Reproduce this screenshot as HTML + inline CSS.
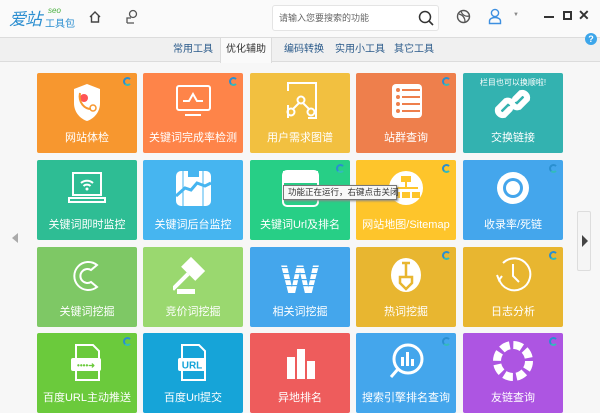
<!DOCTYPE html>
<html><head><meta charset="utf-8"><style>
*{margin:0;padding:0;box-sizing:border-box}
body{width:600px;height:400px;overflow:hidden;background:#f7f7f7;font-family:"Liberation Sans","Noto Sans CJK SC",sans-serif;position:relative}
.hdr{position:absolute;left:0;top:0;width:600px;height:37px;background:#fafafa}
.tabs{position:absolute;left:0;top:37px;width:600px;height:25px;background:#f0f0f0;border-top:1px solid #dcdcdc;border-bottom:1px solid #dcdcdc}
.tab{position:absolute;top:0;height:24px;line-height:23px;font-size:10px;color:#2a5a8a}
.tab.on{background:#fafafa;border-left:1px solid #dcdcdc;border-right:1px solid #dcdcdc;height:25px;color:#333;text-align:center}
.t{position:absolute;width:100px;height:80px;border-radius:2px;color:#fff;font-size:11px;text-align:center}
.t .l{position:absolute;left:0;right:0;top:58px;line-height:14px;white-space:nowrap}
.t svg.i{position:absolute;left:30px;top:8px}
.sp{position:absolute;right:5px;top:4px;width:9px;height:9px;border-radius:50%;border:2px solid #2a8fd0;border-right-color:transparent;border-bottom-color:#3bb}
.search{position:absolute;left:272px;top:5px;width:167px;height:26px;background:#fff;border:1px solid #e4e4e4;border-radius:3px;font-size:9px;color:#666;line-height:24px;padding-left:6px}
</style></head><body>
<div class="hdr"></div>
<div style="position:absolute;left:9px;top:5px;font-size:17px;color:#2b8ed0;font-style:italic;font-family:'Noto Sans CJK SC',sans-serif;letter-spacing:-1px">爱站</div>
<div style="position:absolute;left:48px;top:6px;font-size:8px;color:#4ab040;font-style:italic">seo</div>
<div style="position:absolute;left:45px;top:15px;font-size:10px;color:#2b8ed0;font-family:'Noto Sans CJK SC',sans-serif">工具包</div>
<svg style="position:absolute;left:88px;top:10px" width="14" height="14" viewBox="0 0 14 14"><path d="M2 7L7 2L12 7M3.5 6V12H10.5V6" fill="none" stroke="#444" stroke-width="1.4"/></svg>
<svg style="position:absolute;left:125px;top:9px" width="14" height="16" viewBox="0 0 14 16"><circle cx="8" cy="5" r="3.5" fill="none" stroke="#555" stroke-width="1.3"/><path d="M2 14V9H6M2 14H9" fill="none" stroke="#555" stroke-width="1.3"/></svg>
<div class="search">请输入您要搜索的功能
<svg style="position:absolute;right:4px;top:4px" width="16" height="16" viewBox="0 0 16 16"><circle cx="7" cy="7" r="5.5" fill="none" stroke="#333" stroke-width="1.5"/><path d="M11 11L15 15" stroke="#333" stroke-width="1.6"/></svg></div>
<svg style="position:absolute;left:456px;top:9px" width="15" height="15" viewBox="0 0 15 15"><circle cx="7.5" cy="7.5" r="6" fill="none" stroke="#555" stroke-width="1.4"/><path d="M3 5C7 6 9 9 9 13M5 2C6 6 10 8 13 7" fill="none" stroke="#555" stroke-width="1.2"/></svg>
<svg style="position:absolute;left:488px;top:8px" width="14" height="17" viewBox="0 0 14 17"><circle cx="7" cy="5" r="3.6" fill="none" stroke="#3d8fe0" stroke-width="1.4"/><path d="M1.5 15.5V13A5.5 3.5 0 0 1 12.5 13V15.5Z" fill="none" stroke="#3d8fe0" stroke-width="1.4"/></svg>
<div style="position:absolute;left:513px;top:12px;font-size:6px;color:#888">▼</div>
<div style="position:absolute;left:544px;top:16px;width:10px;height:2px;background:#333"></div>
<div style="position:absolute;left:563px;top:11px;width:9px;height:9px;border:2px solid #333"></div>
<div style="position:absolute;left:578px;top:7px;font-size:14px;font-weight:bold;color:#333">✕</div>
<div class="tabs">
<div class="tab" style="left:173px">常用工具</div>
<div class="tab on" style="left:220px;width:52px">优化辅助</div>
<div class="tab" style="left:284px">编码转换</div>
<div class="tab" style="left:335px">实用小工具</div>
<div class="tab" style="left:394px">其它工具</div>
</div>
<div style="position:absolute;left:585px;top:33px;width:12px;height:12px;border-radius:50%;background:#3da6ea;color:#fff;font-size:9px;font-weight:bold;text-align:center;line-height:12px">?</div>

<div style="position:absolute;left:12px;top:233px;width:0;height:0;border-top:5px solid transparent;border-bottom:5px solid transparent;border-right:6px solid #aaa"></div>
<div style="position:absolute;left:577px;top:211px;width:14px;height:60px;border:1px solid #ddd;border-radius:2px;background:#f5f5f5"></div>
<div style="position:absolute;left:582px;top:235px;width:0;height:0;border-top:6px solid transparent;border-bottom:6px solid transparent;border-left:6px solid #444"></div>

<!-- row1 -->
<div class="t" style="left:37px;top:73px;background:#f7972f"><div class="sp"></div>
<svg class="i" width="40" height="44" viewBox="0 0 40 44"><path d="M20 3L33 8V22C33 32 26 38 20 40C14 38 7 32 7 22V8Z" fill="#fff"/><circle cx="17" cy="17" r="4" fill="#f55"/><path d="M13 12C11 22 18 28 24 28" fill="none" stroke="#f7972f" stroke-width="2"/><circle cx="26" cy="27" r="3" fill="none" stroke="#f7972f" stroke-width="1.5"/></svg><div class="l">网站体检</div></div>
<div class="t" style="left:143px;top:73px;background:#fe8449"><div class="sp"></div>
<svg class="i" width="40" height="44" viewBox="0 0 40 44"><rect x="4" y="5" width="33" height="24" rx="2" fill="none" stroke="#fff" stroke-width="2"/><path d="M10 20H16L20 13L24 20H30M12 34H28" fill="none" stroke="#fff" stroke-width="2"/></svg><div class="l">关键词完成率检测</div></div>
<div class="t" style="left:250px;top:73px;background:#f2c040">
<svg class="i" width="40" height="44" viewBox="0 0 40 44"><path d="M8 10V2H36V37H28M8 24V37" fill="none" stroke="#fff" stroke-width="2"/><circle cx="21" cy="19" r="3.5" fill="none" stroke="#fff" stroke-width="2"/><circle cx="11" cy="31" r="3.5" fill="none" stroke="#fff" stroke-width="2"/><circle cx="31" cy="31" r="3.5" fill="none" stroke="#fff" stroke-width="2"/><path d="M19 22L13 28M23 22L29 28" stroke="#fff" stroke-width="2"/></svg><div class="l">用户需求图谱</div></div>
<div class="t" style="left:356px;top:73px;background:#ee7f4c"><div class="sp"></div>
<svg class="i" width="40" height="44" viewBox="0 0 40 44"><rect x="6" y="3" width="30" height="34" rx="4" fill="#fff"/><g fill="#ee7f4c"><circle cx="12" cy="9" r="2"/><circle cx="12" cy="16" r="2"/><circle cx="12" cy="23" r="2"/><circle cx="12" cy="30" r="2"/><rect x="16" y="8" width="18" height="2"/><rect x="16" y="15" width="18" height="2"/><rect x="16" y="22" width="18" height="2"/><rect x="16" y="29" width="18" height="2"/></g></svg><div class="l">站群查询</div></div>
<div class="t" style="left:463px;top:73px;background:#33b2b0"><div style="position:absolute;top:4px;width:100%;font-size:8px">栏目也可以换顺啦!</div>
<svg class="i" width="40" height="44" viewBox="0 0 40 44"><g fill="none" stroke="#fff" stroke-width="6" stroke-linecap="round"><path d="M17 28L11 34A5 5 0 0 1 5 28L13 20A5 5 0 0 1 19 22"/><path d="M22 18L28 12A5 5 0 0 1 34 18L26 26A5 5 0 0 1 20 24"/></g></svg><div class="l">交换链接</div></div>
<!-- row2 -->
<div class="t" style="left:37px;top:160px;background:#2ebd94">
<svg class="i" width="40" height="44" viewBox="0 0 40 44"><rect x="6" y="5" width="28" height="22" fill="none" stroke="#fff" stroke-width="2"/><path d="M2 30H38V34H2Z" fill="none" stroke="#fff" stroke-width="2"/><path d="M14 15A9 9 0 0 1 26 15M16.5 18A5 5 0 0 1 23.5 18" fill="none" stroke="#fff" stroke-width="2"/><circle cx="20" cy="21" r="1.5" fill="#fff"/></svg><div class="l">关键词即时监控</div></div>
<div class="t" style="left:143px;top:160px;background:#46b5f0">
<svg class="i" width="40" height="44" viewBox="0 0 40 44"><rect x="3" y="3" width="35" height="35" rx="5" fill="#fff"/><path d="M3 28L12 20L18 22L24 15L32 18L38 15" fill="none" stroke="#46b5f0" stroke-width="3"/><path d="M10 3V38M30 3V38" stroke="#46b5f0" stroke-width="1"/><rect x="15" y="3" width="11" height="6" fill="#46b5f0"/></svg><div class="l">关键词后台监控</div></div>
<div class="t" style="left:250px;top:160px;background:#27cf86"><div class="sp"></div>
<svg class="i" width="40" height="44" viewBox="0 0 40 44"><rect x="3" y="3" width="35" height="35" rx="4" fill="none" stroke="#fff" stroke-width="2"/><rect x="3" y="3" width="35" height="12" fill="#fff"/><rect x="10" y="25" width="5" height="5" fill="#fff"/><rect x="18" y="25" width="5" height="5" fill="#fff"/><rect x="26" y="25" width="5" height="5" fill="#fff"/></svg><div class="l">关键词Url及排名</div></div>
<div class="t" style="left:356px;top:160px;background:#fec52b"><div class="sp"></div>
<svg class="i" width="40" height="44" viewBox="0 0 40 44"><circle cx="20" cy="20" r="17" fill="#fff"/><g fill="#fec52b"><rect x="15" y="8" width="10" height="6"/><rect x="8" y="19" width="24" height="2"/><rect x="19" y="14" width="2" height="6"/><rect x="6" y="24" width="8" height="6"/><rect x="16" y="24" width="8" height="6"/><rect x="26" y="24" width="8" height="6"/></g></svg><div class="l">网站地图/Sitemap</div></div>
<div class="t" style="left:463px;top:160px;background:#44a6ec"><div class="sp"></div>
<svg class="i" width="40" height="44" viewBox="0 0 40 44"><circle cx="20" cy="20" r="16" fill="#fff"/><circle cx="20" cy="20" r="10" fill="#44a6ec"/><circle cx="20" cy="20" r="7" fill="#fff"/></svg><div class="l">收录率/死链</div></div>
<!-- row3 -->
<div class="t" style="left:37px;top:247px;background:#7ec865">
<svg class="i" width="40" height="44" viewBox="0 0 40 44"><path d="M30 10A14 14 0 1 0 30 32L24 27A7 7 0 1 1 24 15Z" fill="none" stroke="#fff" stroke-width="2"/></svg><div class="l">关键词挖掘</div></div>
<div class="t" style="left:143px;top:247px;background:#9ad86f">
<svg class="i" width="40" height="44" viewBox="0 0 40 44"><g transform="rotate(45 18 16)"><rect x="8" y="6" width="20" height="14" fill="#fff"/><rect x="16" y="20" width="4" height="22" fill="#fff"/></g><rect x="4" y="34" width="18" height="5" fill="#fff"/></svg><div class="l">竞价词挖掘</div></div>
<div class="t" style="left:250px;top:247px;background:#44a6ec">
<svg class="i" width="40" height="44" viewBox="0 0 40 44"><text x="20" y="38" font-size="40" font-weight="bold" fill="#fff" text-anchor="middle" font-family="Liberation Sans">W</text><g fill="#44a6ec"><rect x="0" y="12" width="40" height="1.2"/><rect x="0" y="18" width="40" height="1.2"/><rect x="0" y="24" width="40" height="1.2"/><rect x="0" y="30" width="40" height="1.2"/></g></svg><div class="l">相关词挖掘</div></div>
<div class="t" style="left:356px;top:247px;background:#e8b630"><div class="sp"></div>
<svg class="i" width="40" height="44" viewBox="0 0 40 44"><ellipse cx="20" cy="20" rx="15" ry="17" fill="#fff"/><path d="M16 8H24M20 8V22M14 22H26V28L20 34L14 28Z" fill="none" stroke="#e8b630" stroke-width="2.5"/></svg><div class="l">热词挖掘</div></div>
<div class="t" style="left:463px;top:247px;background:#e8b630"><div class="sp"></div>
<svg class="i" width="40" height="44" viewBox="0 0 40 44"><path d="M6 24A16 16 0 1 0 10 8" fill="none" stroke="#fff" stroke-width="2"/><path d="M4 20L6 25L9 21M20 9V21L26 27" fill="none" stroke="#fff" stroke-width="2"/></svg><div class="l">日志分析</div></div>
<!-- row4 -->
<div class="t" style="left:37px;top:333px;background:#6bca3c"><div class="sp"></div>
<svg class="i" width="40" height="44" viewBox="0 0 40 44"><path d="M9 4H26L32 10V39H9Z" fill="none" stroke="#fff" stroke-width="2"/><rect x="4" y="17" width="30" height="13" rx="2" fill="#fff"/><text x="19" y="27" font-size="8" fill="#6bca3c" text-anchor="middle" font-weight="bold">••••➜</text></svg><div class="l">百度URL主动推送</div></div>
<div class="t" style="left:143px;top:333px;background:#16a4d8">
<svg class="i" width="40" height="44" viewBox="0 0 40 44"><path d="M9 4H26L32 10V39H9Z" fill="none" stroke="#fff" stroke-width="2"/><rect x="5" y="17" width="28" height="13" rx="2" fill="#fff"/><text x="19" y="27.5" font-size="10" fill="#16a4d8" text-anchor="middle" font-weight="bold">URL</text></svg><div class="l">百度Url提交</div></div>
<div class="t" style="left:250px;top:333px;background:#ee5c5c">
<svg class="i" width="40" height="44" viewBox="0 0 40 44"><rect x="7" y="16" width="8" height="22" fill="#fff"/><rect x="17" y="8" width="8" height="30" fill="#fff"/><rect x="27" y="20" width="8" height="18" fill="#fff"/></svg><div class="l">异地排名</div></div>
<div class="t" style="left:356px;top:333px;background:#44a6ec"><div class="sp"></div>
<svg class="i" width="40" height="44" viewBox="0 0 40 44"><circle cx="22" cy="18" r="14" fill="none" stroke="#fff" stroke-width="3"/><path d="M12 28L5 36" stroke="#fff" stroke-width="3"/><rect x="15" y="16" width="3" height="9" fill="#fff"/><rect x="20" y="11" width="3" height="14" fill="#fff"/><rect x="25" y="18" width="3" height="7" fill="#fff"/></svg><div class="l">搜索引擎排名查询</div></div>
<div class="t" style="left:463px;top:333px;background:#ad55e2"><div class="sp"></div>
<svg class="i" width="40" height="44" viewBox="0 0 40 44"><circle cx="20" cy="20" r="16" fill="none" stroke="#fff" stroke-width="8" stroke-dasharray="9 3.6"/></svg><div class="l">友链查询</div></div>

<div style="position:absolute;left:283px;top:185px;width:114px;height:15px;background:#f8f8f8;border:1px solid #777;box-shadow:1px 1px 2px #888;font-size:8.5px;color:#333;line-height:13px;padding-left:4px;white-space:nowrap">功能正在运行，右键点击关闭</div>
</body></html>
